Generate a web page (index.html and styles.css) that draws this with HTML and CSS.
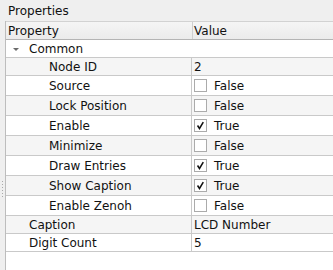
FILE: index.html
```html
<!DOCTYPE html>
<html lang="en">
<head>
    <meta charset="UTF-8">
    <title>Properties</title>
    <link rel="stylesheet" href="styles.css">
</head>
<body>
    <div class="panel-title">Properties</div>
    <div class="panel-body">
        <div class="gutter"><div class="grip"></div></div>
        <div class="prop-table">
            <div class="row head">
                <div class="cell name">Property</div>
                <div class="cell value">Value</div>
            </div>
            <div class="row group">
                <div class="cell name lvl0"><span class="arrow"></span>Common</div>
                <div class="cell value"></div>
            </div>
            <div class="row alt">
                <div class="cell name lvl1">Node ID</div>
                <div class="cell value">2</div>
            </div>
            <div class="row tall">
                <div class="cell name lvl1">Source</div>
                <div class="cell value"><span class="check"></span>False</div>
            </div>
            <div class="row tall alt">
                <div class="cell name lvl1">Lock Position</div>
                <div class="cell value"><span class="check"></span>False</div>
            </div>
            <div class="row tall">
                <div class="cell name lvl1">Enable</div>
                <div class="cell value"><span class="check"><svg viewBox="0 0 13 13"><path d="M3 6.5 L5.3 10 L9.8 2.5"/></svg></span>True</div>
            </div>
            <div class="row tall alt">
                <div class="cell name lvl1">Minimize</div>
                <div class="cell value"><span class="check"></span>False</div>
            </div>
            <div class="row tall">
                <div class="cell name lvl1">Draw Entries</div>
                <div class="cell value"><span class="check"><svg viewBox="0 0 13 13"><path d="M3 6.5 L5.3 10 L9.8 2.5"/></svg></span>True</div>
            </div>
            <div class="row tall alt">
                <div class="cell name lvl1">Show Caption</div>
                <div class="cell value"><span class="check"><svg viewBox="0 0 13 13"><path d="M3 6.5 L5.3 10 L9.8 2.5"/></svg></span>True</div>
            </div>
            <div class="row tall">
                <div class="cell name lvl1">Enable Zenoh</div>
                <div class="cell value"><span class="check"></span>False</div>
            </div>
            <div class="row alt">
                <div class="cell name lvl0">Caption</div>
                <div class="cell value">LCD Number</div>
            </div>
            <div class="row">
                <div class="cell name lvl0">Digit Count</div>
                <div class="cell value">5</div>
            </div>
        </div>
    </div>
</body>
</html>
```

FILE: styles.css
```css
html, body {
    height: 100%;
}
body {
    margin: 0;
    background-color: #efefef;
    color: #111111;
    font-family: "DejaVu Sans", sans-serif;
    font-size: 12px;
    display: flex;
    flex-direction: column;
    overflow: hidden;
}
.panel-title {
    height: 21px;
    line-height: 22px;
    padding-left: 8px;
    box-sizing: border-box;
}
.panel-body {
    flex: 1;
    display: flex;
}
.gutter {
    width: 5px;
    padding-top: 160px;
}
.grip {
    width: 1px;
    height: 17px;
    margin-left: 2px;
    background: repeating-linear-gradient(to bottom, #a9a9a9 0 1px, transparent 1px 3px);
}
.prop-table {
    flex: 1;
    background-color: #ffffff;
    border-left: 1px solid #bdbdbd;
}
.row {
    display: flex;
    height: 18px;
    box-sizing: border-box;
    border-bottom: 1px solid #c9c9c9;
}
.row.tall {
    height: 20px;
}
.row.alt {
    background-color: #f5f5f5;
}
.row.head {
    height: 19px;
    border-top: 1px solid #d2d2d2;
    border-bottom: 1px solid #b4b4b4;
    background: linear-gradient(#f5f5f5, #ebebeb);
}
.cell {
    display: flex;
    align-items: center;
    white-space: nowrap;
}
.cell.name {
    width: 186px;
    border-right: 1px solid #c9c9c9;
    padding-left: 2px;
    box-sizing: border-box;
}
.row.group .cell.name {
    border-right-color: transparent;
}
.head .cell.name {
    width: 187px;
    border-right-color: #cfcfcf;
}
.cell.value {
    flex: 1;
    padding-left: 2px;
}
.head .cell.value {
    padding-left: 1px;
}
.cell.lvl0 {
    padding-left: 23px;
    position: relative;
}
.cell.lvl1 {
    padding-left: 43px;
}
.arrow {
    position: absolute;
    left: 7px;
    top: 8px;
    border-left: 3px solid transparent;
    border-right: 3px solid transparent;
    border-top: 3px solid #6a6a6a;
}
.check {
    width: 11px;
    height: 11px;
    border: 1px solid #ababab;
    background-color: #ffffff;
    margin-right: 7px;
    display: flex;
}
.check svg {
    width: 11px;
    height: 11px;
}
.check path {
    fill: none;
    stroke: #111111;
    stroke-width: 1.8;
}
```
